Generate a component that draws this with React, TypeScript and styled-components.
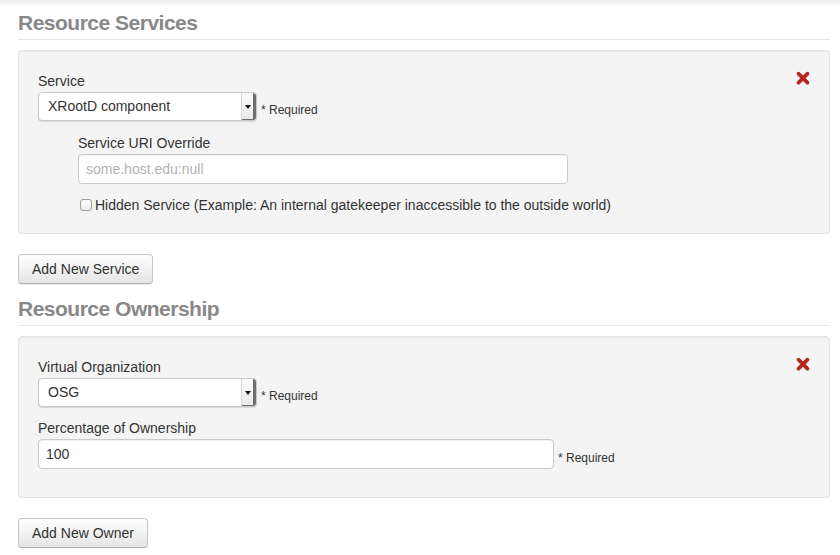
import React from 'react';
import styled, { createGlobalStyle } from 'styled-components';

const Global = createGlobalStyle`
  html, body { margin: 0; padding: 0; background: #fff; }
  body {
    font-family: "Liberation Sans", Arial, Helvetica, sans-serif;
    font-size: 14px;
    color: #333;
  }
`;

const Page = styled.div`
  width: 812px;
  padding: 11px 10px 0 18px;
  background: linear-gradient(#ebebeb, #fff 7px) no-repeat;
`;

const SectionTitle = styled.h2<{ $spaced?: boolean }>`
  margin: ${(p) => (p.$spaced ? '13px' : '0')} 0 10px;
  padding-bottom: 4px;
  border-bottom: 1px solid #e6e6e6;
  font-size: 21px;
  line-height: 24px;
  font-weight: bold;
  letter-spacing: -0.5px;
  color: #888;
`;

const Well = styled.div`
  position: relative;
  padding: 20px 19px 18px;
  background: #f4f4f4;
  border: 1px solid #e3e3e3;
  border-radius: 4px;
  box-shadow: inset 0 1px 1px rgba(0, 0, 0, 0.04);
`;

const RemoveButton = styled.span`
  position: absolute;
  top: 20px;
  right: 19px;
  width: 14px;
  height: 14px;
  display: flex;
`;

const Group = styled.div<{ $mb?: number }>`
  margin-bottom: ${(p) => (p.$mb ?? 12)}px;
`;

const Indent = styled.div`
  margin-left: 40px;
`;

const Label = styled.label`
  display: block;
  line-height: 20px;
  margin-bottom: 1px;
`;

const Row = styled.div`
  display: flex;
  align-items: flex-end;
  gap: 4px;
`;

const Required = styled.span`
  font-size: 12px;
  line-height: 14px;
  margin-bottom: 4px;
`;

const SelectBox = styled.div`
  width: 219px;
  height: 29px;
  box-sizing: border-box;
  display: flex;
  border: 1px solid #c8c8c8;
  border-radius: 4px;
  background: #fff;
  box-shadow: 0 1px 1px rgba(0, 0, 0, 0.12);
  overflow: hidden;
`;

const SelectValue = styled.span`
  flex: 1;
  padding-left: 9px;
  line-height: 27px;
  white-space: nowrap;
`;

const SelectArrow = styled.span`
  width: 15px;
  box-sizing: border-box;
  border-left: 1px solid #d6d6d6;
  background: linear-gradient(#fbfbfb, #e9e9e9);
  box-shadow: inset -3px -1px 0 #6e6e6e;
  display: flex;
  align-items: center;
  justify-content: center;
  padding-right: 3px;

  &::after {
    content: '';
    border-left: 3px solid transparent;
    border-right: 3px solid transparent;
    border-top: 4px solid #111;
  }
`;

const TextInput = styled.input<{ $w: number }>`
  width: ${(p) => p.$w}px;
  height: 30px;
  box-sizing: border-box;
  padding: 0 7px;
  border: 1px solid #cacaca;
  border-radius: 4px;
  background: #fff;
  box-shadow: inset 0 1px 1px rgba(0, 0, 0, 0.06);
  font-family: inherit;
  font-size: 14px;
  color: #333;
  outline: none;

  &::placeholder {
    color: #b3b3b3;
  }
`;

const CheckRow = styled.label`
  display: flex;
  align-items: center;
  gap: 3px;
  line-height: 20px;
  padding-left: 2px;
`;

const Checkbox = styled.input`
  appearance: none;
  margin: 0;
  width: 12px;
  height: 12px;
  border: 1px solid #9d9d9d;
  border-radius: 3px;
  background: linear-gradient(#fff, #ececec);
`;

const Button = styled.button`
  display: block;
  margin-top: 20px;
  height: 30px;
  padding: 0 13px;
  font-family: inherit;
  font-size: 14px;
  color: #333;
  border: 1px solid #c6c6c6;
  border-bottom-color: #b0b0b0;
  border-radius: 4px;
  background: linear-gradient(#ffffff, #e5e5e5);
  box-shadow: 0 1px 1px rgba(0, 0, 0, 0.08);
`;

const RemoveIcon = () => (
  <svg width="14" height="14" viewBox="0 0 14 14">
    <path d="M2.5 2.5 L11.5 11.5 M11.5 2.5 L2.5 11.5" stroke="#7a1410" strokeWidth="3.8" strokeLinecap="round" opacity="0.35" transform="translate(0 0.6)" />
    <path d="M2.5 2.5 L11.5 11.5 M11.5 2.5 L2.5 11.5" stroke="#b8231b" strokeWidth="3.4" strokeLinecap="round" />
  </svg>
);

const Select = ({ value }: { value: string }) => (
  <SelectBox>
    <SelectValue>{value}</SelectValue>
    <SelectArrow />
  </SelectBox>
);

export default function App() {
  return (
    <Page>
      <Global />
      <SectionTitle>Resource Services</SectionTitle>
      <Well>
        <RemoveButton><RemoveIcon /></RemoveButton>
        <Group>
          <Label>Service</Label>
          <Row>
            <Select value="XRootD component" />
            <Required>* Required</Required>
          </Row>
        </Group>
        <Indent>
          <Group $mb={11}>
            <Label>Service URI Override</Label>
            <TextInput $w={490} placeholder="some.host.edu:null" />
          </Group>
          <CheckRow>
            <Checkbox type="checkbox" />
            Hidden Service (Example: An internal gatekeeper inaccessible to the outside world)
          </CheckRow>
        </Indent>
      </Well>
      <Button>Add New Service</Button>

      <SectionTitle $spaced>Resource Ownership</SectionTitle>
      <Well>
        <RemoveButton><RemoveIcon /></RemoveButton>
        <Group $mb={11}>
          <Label>Virtual Organization</Label>
          <Row>
            <Select value="OSG" />
            <Required>* Required</Required>
          </Row>
        </Group>
        <Group $mb={10}>
          <Label>Percentage of Ownership</Label>
          <Row>
            <TextInput $w={516} defaultValue="100" />
            <Required>* Required</Required>
          </Row>
        </Group>
      </Well>
      <Button>Add New Owner</Button>
    </Page>
  );
}
